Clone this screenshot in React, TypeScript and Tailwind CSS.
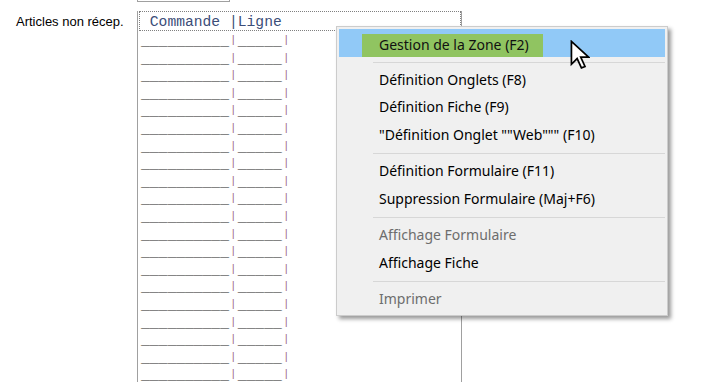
import React from "react";

type MenuEntry =
  | { kind: "item"; label: string; disabled?: boolean; active?: boolean }
  | { kind: "sep" };

const menu: MenuEntry[] = [
  { kind: "item", label: "Gestion de la Zone (F2)", active: true },
  { kind: "sep" },
  { kind: "item", label: "Définition Onglets (F8)" },
  { kind: "item", label: "Définition Fiche (F9)" },
  { kind: "item", label: '"Définition Onglet ""Web""" (F10)' },
  { kind: "sep" },
  { kind: "item", label: "Définition Formulaire (F11)" },
  { kind: "item", label: "Suppression Formulaire (Maj+F6)" },
  { kind: "sep" },
  { kind: "item", label: "Affichage Formulaire", disabled: true },
  { kind: "item", label: "Affichage Fiche" },
  { kind: "sep" },
  { kind: "item", label: "Imprimer", disabled: true },
];

const rows = Array.from({ length: 20 }, (_, i) => i);

function Bar() {
  return (
    <span className="inline-block w-[8.8px] text-center align-top text-[10px] leading-[15px] text-[#9a5c84]">
      |
    </span>
  );
}

function ListBox() {
  return (
    <div className="w-[325px] h-[380px] border-x border-[#a0a0a0] font-['Liberation_Mono',monospace] text-[14.67px] leading-[17.6px]">
      <div className="ml-[1px] h-[20px] border border-dotted border-[#808080] pl-[1px] pt-[2px] whitespace-pre text-[#3b4d78]">
        {" Commande |Ligne"}
      </div>
      <div className="pt-[2px] pl-[3px]">
        {rows.map((r) => (
          <div key={r} className="h-[17.6px] whitespace-pre text-[#1a1a1a]">
            {"__________"}
            <Bar />
            {"_____"}
            <Bar />
          </div>
        ))}
      </div>
    </div>
  );
}

function ContextMenu() {
  return (
    <div className="absolute left-[336px] top-[26px] w-[332px] bg-[#f0f0f0] border border-[#cccccc] p-[2px] shadow-[3px_3px_4px_rgba(0,0,0,0.4)] font-['Noto_Sans',sans-serif] text-[14px]">
      {menu.map((m, i) =>
        m.kind === "sep" ? (
          <div key={i} className="h-[9px] pt-[5px] pl-[34px]">
            <div className="h-[1px] bg-[#d7d7d7]" />
          </div>
        ) : m.active ? (
          <div key={i} className="h-[27.5px] bg-[#91c9f7] flex items-end">
            <div className="ml-[23px] w-[181px] h-[23px] bg-[#90c461] pl-[17px] leading-[21px] text-[#111111]">
              {m.label}
            </div>
          </div>
        ) : (
          <div
            key={i}
            className={
              "h-[27.5px] leading-[27.5px] pl-[40px] " +
              (m.disabled ? "text-[#6d6d6d]" : "text-[#000000]")
            }
          >
            {m.label}
          </div>
        )
      )}
    </div>
  );
}

function Cursor() {
  return (
    <svg
      className="absolute left-[570px] top-[40px]"
      width="20"
      height="30"
      viewBox="0 0 14 21"
    >
      <path
        d="M1 1 V17 L5 13 L8 19.5 L10.5 18.5 L7.5 12 H13 Z"
        fill="#ffffff"
        stroke="#000000"
        strokeWidth="1.2"
        strokeLinejoin="miter"
      />
    </svg>
  );
}

export default function App() {
  return (
    <div className="relative w-[713px] h-[382px] bg-white overflow-hidden">
      <div className="ml-[137px] w-[93px] h-[2px] border-x border-b border-[#a0a0a0]" />
      <div className="flex mt-[9px]">
        <div className="w-[137px] pl-[16px] pt-[3px] font-['Liberation_Sans',Arial,sans-serif] text-[13px] leading-[16px] text-[#000000]">
          Articles non récep.
        </div>
        <ListBox />
      </div>
      <ContextMenu />
      <Cursor />
    </div>
  );
}
